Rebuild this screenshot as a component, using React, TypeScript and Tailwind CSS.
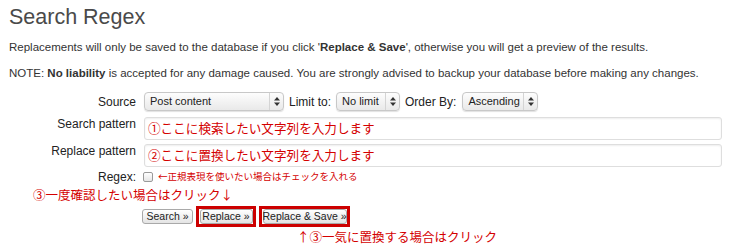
import React from "react";

function FakeSelect({ label, width }: { label: string; width: string }) {
  return (
    <div
      className={`flex h-[19px] items-center rounded-[4px] border border-[#c8c8c8] bg-gradient-to-b from-[#fdfdfd] to-[#e9e9e9] shadow-[0_1px_1px_rgba(0,0,0,0.12)] ${width}`}
    >
      <span className="flex-1 overflow-hidden whitespace-nowrap pl-[5px] text-[11px] leading-none text-[#222]">{label}</span>
      <span className="flex h-full w-[14px] shrink-0 flex-col items-center justify-center border-l border-[#d4d4d4] text-[#333]">
        <svg width="6" height="9" viewBox="0 0 6 9">
          <path d="M3 0 L6 3.5 L0 3.5 Z" fill="#333" />
          <path d="M3 9 L6 5.5 L0 5.5 Z" fill="#333" />
        </svg>
      </span>
    </div>
  );
}

function Btn({ label, w }: { label: string; w: string }) {
  return (
    <div
      className={`flex h-[15px] items-center justify-center whitespace-nowrap rounded-[3px] border border-[#a9a9a9] bg-gradient-to-b from-[#ffffff] to-[#e4e4e4] text-[10.5px] leading-none text-[#222] ${w}`}
    >
      {label}
    </div>
  );
}

export default function App() {
  return (
    <div className="h-[245px] w-[730px] overflow-hidden bg-white font-['Liberation_Sans',Arial,sans-serif] text-[#333]">
      <div className="pl-[9px] pt-[3px]">
        <div className="h-[28px] text-[21.5px] leading-[28px] text-[#4a4a4a]">Search Regex</div>
        <p className="mt-[8px] h-[16px] whitespace-nowrap text-[11.5px] leading-[16px] text-[#333]">
          Replacements will only be saved to the database if you click '<b>Replace &amp; Save</b>', otherwise you will get a preview of the results.
        </p>
        <p className="mt-[10px] h-[16px] whitespace-nowrap text-[11.5px] leading-[16px] text-[#333]">
          NOTE: <b>No liability</b> is accepted for any damage caused. You are strongly advised to backup your database before making any changes.
        </p>
      </div>

      {/* Source row */}
      <div className="mt-[11px] flex h-[19px] items-center pl-[9px]">
        <div className="w-[128px] pr-[1px] text-right text-[12px] text-[#222]">Source</div>
        <div className="ml-[7px] flex items-center">
          <FakeSelect label="Post content" width="w-[140px]" />
          <span className="ml-[5px] text-[12px] text-[#222]">Limit to:</span>
          <div className="ml-[5px]">
            <FakeSelect label="No limit" width="w-[64px]" />
          </div>
          <span className="ml-[5px] text-[12px] text-[#222]">Order By:</span>
          <div className="ml-[6px]">
            <FakeSelect label="Ascending" width="w-[76px]" />
          </div>
        </div>
      </div>

      {/* Search pattern */}
      <div className="mt-[6px] flex h-[23px] items-start pl-[9px]">
        <div className="w-[128px] pr-[1px] text-right text-[12px] leading-[14px] text-[#222]">Search pattern</div>
        <div className="ml-[7px] flex h-[23px] w-[578px] items-center rounded-[3px] border border-[#dedede] pl-[3px] shadow-[inset_0_1px_2px_rgba(0,0,0,0.07)]">
          <span className="font-['Noto_Sans_CJK_JP',sans-serif] text-[12.6px] leading-none text-[#d40000]">①ここに検索したい文字列を入力します</span>
        </div>
      </div>

      {/* Replace pattern */}
      <div className="mt-[4px] flex h-[23px] items-start pl-[9px]">
        <div className="w-[128px] pr-[1px] text-right text-[12px] leading-[14px] text-[#222]">Replace pattern</div>
        <div className="ml-[7px] flex h-[23px] w-[578px] items-center rounded-[3px] border border-[#dedede] pl-[3px] shadow-[inset_0_1px_2px_rgba(0,0,0,0.07)]">
          <span className="font-['Noto_Sans_CJK_JP',sans-serif] text-[12.6px] leading-none text-[#d40000]">②ここに置換したい文字列を入力します</span>
        </div>
      </div>

      {/* Regex row */}
      <div className="mt-[3px] flex h-[14px] items-center pl-[9px]">
        <div className="w-[128px] pr-[1px] text-right text-[12px] text-[#222]">Regex:</div>
        <div className="ml-[6px] h-[10px] w-[10px] rounded-[2px] border border-[#9a9a9a] bg-gradient-to-b from-white to-[#e6e6e6]" />
        <span className="ml-[5px] font-['Noto_Sans_CJK_JP',sans-serif] text-[9.5px] leading-none text-[#d40000]">←正規表現を使いたい場合はチェックを入れる</span>
      </div>

      {/* annotation 3 */}
      <div className="mt-[3px] h-[16px] pl-[33px] font-['Noto_Sans_CJK_JP',sans-serif] text-[12.5px] leading-[16px] text-[#d40000]">
        ③一度確認したい場合はクリック↓
      </div>

      {/* Buttons */}
      <div className="mt-[3px] flex h-[21px] items-center pl-[142px]">
        <Btn label="Search »" w="w-[51px]" />
        <div className="ml-[3px] flex h-[21px] w-[60px] items-center justify-center border-[3px] border-[#cc0000]">
          <Btn label="Replace »" w="w-[53px]" />
        </div>
        <div className="ml-[3px] flex h-[21px] w-[91px] items-center justify-center border-[3px] border-[#cc0000]">
          <Btn label="Replace & Save »" w="w-[84px]" />
        </div>
      </div>

      {/* annotation bottom */}
      <div className="mt-[2px] h-[16px] pl-[297px] font-['Noto_Sans_CJK_JP',sans-serif] text-[12.5px] leading-[16px] text-[#d40000]">
        ↑③一気に置換する場合はクリック
      </div>
    </div>
  );
}
